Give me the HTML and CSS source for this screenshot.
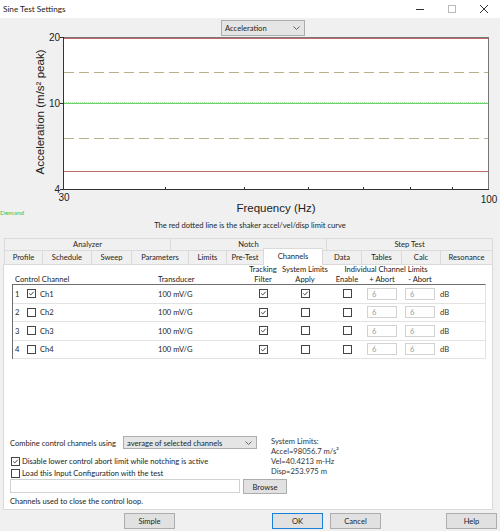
FILE: index.html
```html
<!DOCTYPE html>
<html>
<head>
<meta charset="utf-8">
<title>Sine Test Settings</title>
<link rel="stylesheet" href="styles.css">
</head>
<body>
<div class="titlebar">
  <span class="title">Sine Test Settings</span>
  <div class="wincontrols">
    <span class="wc"><svg width="10" height="10" viewBox="0 0 10 10"><line x1="1" y1="5.5" x2="9" y2="5.5" stroke="#333" stroke-width="1"/></svg></span>
    <span class="wc"><svg width="10" height="10" viewBox="0 0 10 10"><rect x="1.5" y="1.5" width="7" height="7" fill="none" stroke="#bbb" stroke-width="1"/></svg></span>
    <span class="wc"><svg width="10" height="10" viewBox="0 0 10 10"><path d="M1 1 L9 9 M9 1 L1 9" stroke="#333" stroke-width="1"/></svg></span>
  </div>
</div>

<div class="chart-wrap">
  <svg class="chart" width="500" height="200" viewBox="0 0 500 200">
    <rect x="63.5" y="19.5" width="425" height="152" fill="#fff" stroke="#777" stroke-width="1"/>
    <line x1="64" y1="20.5" x2="488" y2="20.5" stroke="#c06a6a" stroke-width="1"/>
    <line x1="64" y1="153.5" x2="488" y2="153.5" stroke="#c06a6a" stroke-width="1"/>
    <line x1="64" y1="54.5" x2="488" y2="54.5" stroke="#b8b088" stroke-width="1" stroke-dasharray="10 5"/>
    <line x1="64" y1="120.5" x2="488" y2="120.5" stroke="#b8b088" stroke-width="1" stroke-dasharray="10 5"/>
    <line x1="64" y1="85.5" x2="488" y2="85.5" stroke="#6fd26f" stroke-width="1"/>
    <line x1="64" y1="84.5" x2="488" y2="84.5" stroke="#a8e6a8" stroke-width="1" stroke-dasharray="1 1"/>
    <line x1="63.5" y1="19" x2="63.5" y2="172" stroke="#333" stroke-width="1"/>
    <line x1="60" y1="19.5" x2="63" y2="19.5" stroke="#333"/>
    <line x1="60" y1="85.5" x2="63" y2="85.5" stroke="#333"/>
    <line x1="60" y1="171.5" x2="63" y2="171.5" stroke="#333"/>
    <line x1="63.5" y1="171.5" x2="489" y2="171.5" stroke="#333" stroke-width="1"/>
    <g stroke="#333" stroke-width="1">
      <line x1="165.5" y1="169" x2="165.5" y2="171"/>
      <line x1="244.5" y1="169" x2="244.5" y2="171"/>
      <line x1="308.5" y1="169" x2="308.5" y2="171"/>
      <line x1="363.5" y1="169" x2="363.5" y2="171"/>
      <line x1="410.5" y1="169" x2="410.5" y2="171"/>
      <line x1="452.5" y1="169" x2="452.5" y2="171"/>
    </g>
    <g class="ticklbl">
      <text x="60" y="23" text-anchor="end">20</text>
      <text x="60" y="89" text-anchor="end">10</text>
      <text x="60" y="175" text-anchor="end">4</text>
      <text x="64" y="183" text-anchor="middle">30</text>
      <text x="489" y="185" text-anchor="middle">100</text>
    </g>
    <text class="axlbl" transform="translate(44 94) rotate(-90)" text-anchor="middle" textLength="125" lengthAdjust="spacingAndGlyphs">Acceleration (m/s² peak)</text>
    <text class="axlbl" x="276" y="194" text-anchor="middle">Frequency (Hz)</text>
    <text class="demand" x="0" y="197">Demand</text>
  </svg>
  <div class="select sel-accel"><span>Acceleration</span><svg class="chev" width="7" height="4" viewBox="0 0 7 4"><path d="M0.5 0.5 L3.5 3.5 L6.5 0.5" fill="none" stroke="#555" stroke-width="0.9"/></svg></div>
</div>

<div class="caption">The red dotted line is the shaker accel/vel/disp limit curve</div>

<div class="tabs">
  <div class="groups">
    <div class="grp g1">Analyzer</div>
    <div class="grp g2">Notch</div>
    <div class="grp g3">Step Test</div>
  </div>
  <div class="tabrow">
    <div class="tab t-profile">Profile</div>
    <div class="tab t-schedule">Schedule</div>
    <div class="tab t-sweep">Sweep</div>
    <div class="tab t-params">Parameters</div>
    <div class="tab t-limits">Limits</div>
    <div class="tab t-pretest">Pre-Test</div>
    <div class="tab t-channels active">Channels</div>
    <div class="tab t-data">Data</div>
    <div class="tab t-tables">Tables</div>
    <div class="tab t-calc">Calc</div>
    <div class="tab t-res">Resonance</div>
  </div>
</div>

<div class="panel">
  <div class="thead">
    <div class="h h-track1">Tracking</div>
    <div class="h h-sys1">System Limits</div>
    <div class="h h-ind">Individual Channel Limits</div>
    <div class="h h-ctrl">Control Channel</div>
    <div class="h h-trans">Transducer</div>
    <div class="h h-track2">Filter</div>
    <div class="h h-sys2">Apply</div>
    <div class="h h-en">Enable</div>
    <div class="h h-pa">+ Abort</div>
    <div class="h h-ma">- Abort</div>
  </div>
  <div class="ctable">
    <div class="row">
      <span class="num">1</span>
      <span class="cbcell"><span class="cb"><svg viewBox="0 0 9 9"><path d="M1.6 4.4 L3.6 6.4 L7.4 2.2"/></svg></span></span>
      <span class="name">Ch1</span>
      <span class="trans">100 mV/G</span>
      <span class="c-track"><span class="cb"><svg viewBox="0 0 9 9"><path d="M1.6 4.4 L3.6 6.4 L7.4 2.2"/></svg></span></span>
      <span class="c-apply"><span class="cb"><svg viewBox="0 0 9 9"><path d="M1.6 4.4 L3.6 6.4 L7.4 2.2"/></svg></span></span>
      <span class="c-en"><span class="cb"></span></span>
      <span class="inp c-pa">6</span>
      <span class="inp c-ma">6</span>
      <span class="db">dB</span>
    </div>
    <div class="row">
      <span class="num">2</span>
      <span class="cbcell"><span class="cb"></span></span>
      <span class="name">Ch2</span>
      <span class="trans">100 mV/G</span>
      <span class="c-track"><span class="cb"><svg viewBox="0 0 9 9"><path d="M1.6 4.4 L3.6 6.4 L7.4 2.2"/></svg></span></span>
      <span class="c-apply"><span class="cb"></span></span>
      <span class="c-en"><span class="cb"></span></span>
      <span class="inp c-pa">6</span>
      <span class="inp c-ma">6</span>
      <span class="db">dB</span>
    </div>
    <div class="row">
      <span class="num">3</span>
      <span class="cbcell"><span class="cb"></span></span>
      <span class="name">Ch3</span>
      <span class="trans">100 mV/G</span>
      <span class="c-track"><span class="cb"><svg viewBox="0 0 9 9"><path d="M1.6 4.4 L3.6 6.4 L7.4 2.2"/></svg></span></span>
      <span class="c-apply"><span class="cb"></span></span>
      <span class="c-en"><span class="cb"></span></span>
      <span class="inp c-pa">6</span>
      <span class="inp c-ma">6</span>
      <span class="db">dB</span>
    </div>
    <div class="row">
      <span class="num">4</span>
      <span class="cbcell"><span class="cb"></span></span>
      <span class="name">Ch4</span>
      <span class="trans">100 mV/G</span>
      <span class="c-track"><span class="cb"><svg viewBox="0 0 9 9"><path d="M1.6 4.4 L3.6 6.4 L7.4 2.2"/></svg></span></span>
      <span class="c-apply"><span class="cb"></span></span>
      <span class="c-en"><span class="cb"></span></span>
      <span class="inp c-pa">6</span>
      <span class="inp c-ma">6</span>
      <span class="db">dB</span>
    </div>
  </div>

  <div class="bottom">
    <div class="top-part">
      <div class="left-col">
        <div class="combine">
          <span class="lbl">Combine control channels using</span>
          <div class="select sel-combine"><span>average of selected channels</span><svg class="chev" width="7" height="4" viewBox="0 0 7 4"><path d="M0.5 0.5 L3.5 3.5 L6.5 0.5" fill="none" stroke="#555" stroke-width="0.9"/></svg></div>
        </div>
        <div class="chkline first"><span class="cb"><svg viewBox="0 0 9 9"><path d="M1.6 4.4 L3.6 6.4 L7.4 2.2"/></svg></span><span>Disable lower control abort limit while notching is active</span></div>
        <div class="chkline"><span class="cb"></span><span>Load this Input Configuration with the test</span></div>
      </div>
      <div class="syslimits">
        <div>System Limits:</div>
        <div>Accel=98056.7 m/s²</div>
        <div>Vel=40.4213 m-Hz</div>
        <div>Disp=253.975 m</div>
      </div>
    </div>
    <div class="fileline">
      <span class="textbox"></span>
      <span class="btn browse">Browse</span>
    </div>
    <div class="note">Channels used to close the control loop.</div>
  </div>
</div>

<div class="buttons">
  <span class="btn b-simple">Simple</span>
  <span class="btn b-ok">OK</span>
  <span class="btn b-cancel">Cancel</span>
  <span class="btn b-help">Help</span>
</div>
</body>
</html>
```

FILE: styles.css
```css
* { box-sizing: border-box; }
html, body { margin: 0; padding: 0; }
body {
  width: 500px;
  height: 531px;
  overflow: hidden;
  background: #f0f0f0;
  font-family: Lato, "Segoe UI", "Noto Sans", sans-serif;
  font-size: 7.6px;
  color: #1e1e1e;
}

/* title bar */
.titlebar {
  height: 18px;
  background: #fff;
  display: flex;
  align-items: center;
  padding-left: 3px;
}
.title { font-size: 8.2px; color: #222; }
.wincontrols { margin-left: auto; display: flex; }
.wc {
  width: 32px;
  height: 18px;
  display: flex;
  align-items: center;
  justify-content: center;
}

/* dropdowns */
.select {
  display: flex;
  align-items: center;
  background: #e5e5e5;
  border: 1px solid #adadad;
  color: #1e1e1e;
  padding: 0 4px 0 3px;
}
.select .chev { margin-left: auto; }

/* chart */
.chart-wrap { position: relative; height: 200px; }
.chart { display: block; }
.sel-accel {
  position: absolute;
  left: 221px;
  top: 2px;
  width: 84px;
  height: 16px;
}
.ticklbl text { font-family: "Liberation Sans", Arial, sans-serif; font-size: 10px; fill: #222; }
.axlbl { font-family: "Liberation Sans", Arial, sans-serif; font-size: 11.5px; fill: #222; }
.demand { font-family: Lato, sans-serif; font-size: 6.5px; fill: #3ec43e; }

.caption {
  margin-top: 1px;
  height: 12px;
  line-height: 12px;
  text-align: center;
  margin-bottom: 7px;
}

/* tabs */
.tabs { margin-left: 4px; width: 489px; }
.groups, .tabrow { display: flex; }
.grp {
  height: 12px;
  line-height: 11px;
  text-align: center;
  border: 1px solid #dadada;
  border-right: none;
  border-bottom: none;
  background: #f0f0f0;
}
.grp:last-child { border-right: 1px solid #dadada; }
.g1 { width: 166px; }
.g2 { width: 156px; }
.g3 { width: 167px; }
.tabrow { height: 14px; align-items: flex-end; }
.tab {
  height: 14px;
  line-height: 13px;
  text-align: center;
  border: 1px solid #dadada;
  border-right: none;
  border-bottom: none;
  background: #f0f0f0;
}
.tab:last-child { border-right: 1px solid #dadada; }
.tab.active {
  background: #fff;
  height: 17px;
  line-height: 14px;
  margin-bottom: -1px;
  position: relative;
  z-index: 1;
  border-right: 1px solid #dadada;
}
.tab.active + .tab { border-left: none; }
.t-profile { width: 38px; }
.t-schedule { width: 49px; }
.t-sweep { width: 40px; }
.t-params { width: 57px; }
.t-limits { width: 38px; }
.t-pretest { width: 37px; }
.t-channels { width: 60px; }
.t-data { width: 38px; }
.t-tables { width: 40px; }
.t-calc { width: 39px; }
.t-res { width: 53px; }

/* panel */
.panel {
  margin-left: 3px;
  width: 490px;
  height: 246px;
  background: #fff;
  border: 1px solid #dadada;
  display: flex;
  flex-direction: column;
}

.thead, .row {
  display: grid;
  grid-template-columns: 14px 13px 118px 95px 20px 64px 20px 10px 30px 8px 30px 5px 1fr;
}
.thead {
  margin-left: 9px;
  width: 474px;
  grid-template-rows: 9.5px 9.5px;
  line-height: 9.5px;
  color: #222;
}
.h { white-space: nowrap; display: flex; justify-content: center; }
.h-track1 { grid-row: 1; grid-column: 5; }
.h-sys1 { grid-row: 1; grid-column: 6; }
.h-ind { grid-row: 1; grid-column: 7 / 12; }
.h-ctrl { grid-row: 2; grid-column: 1 / 4; justify-content: flex-start; padding-left: 2px; }
.h-trans { grid-row: 2; grid-column: 4; justify-content: flex-start; }
.h-track2 { grid-row: 2; grid-column: 5; }
.h-sys2 { grid-row: 2; grid-column: 6; }
.h-en { grid-row: 2; grid-column: 7; }
.h-pa { grid-row: 2; grid-column: 9; }
.h-ma { grid-row: 2; grid-column: 11; }

.ctable {
  margin-left: 8px;
  width: 474px;
  border-top: 1px solid #6e6e6e;
  border-left: 1px solid #6e6e6e;
  border-right: 1px solid #e2e2e2;
}
.row {
  height: 18.5px;
  align-items: center;
  border-bottom: 1px solid #e2e2e2;
}
.num { grid-column: 1; padding-left: 2px; }
.cbcell { grid-column: 2; display: flex; }
.name { grid-column: 3; }
.trans { grid-column: 4; }
.c-track { grid-column: 5; }
.c-apply { grid-column: 6; }
.c-en { grid-column: 7; }
.c-pa { grid-column: 9; }
.c-ma { grid-column: 11; }
.db { grid-column: 13; color: #333; }
.c-track, .c-apply, .c-en { display: flex; justify-content: center; }
.cb {
  width: 9px;
  height: 9px;
  border: 1px solid #444;
  background: #fff;
  display: inline-block;
  flex: none;
}
.cb svg { display: block; width: 7px; height: 7px; }
.cb svg path { fill: none; stroke: #222; stroke-width: 1.1; }
.inp {
  height: 12px;
  line-height: 10px;
  border: 1px solid #d2d2d2;
  background: #fff;
  color: #9a9a9a;
  padding-left: 4px;
}

/* bottom area */
.bottom {
  margin-top: auto;
  padding: 0 0 2px 6px;
}
.top-part { display: flex; }
.left-col { width: 261px; }
.combine {
  height: 13px;
  display: flex;
  align-items: center;
}
.combine .lbl { width: 113px; }
.sel-combine { width: 134px; height: 13px; }
.chkline {
  height: 12px;
  display: flex;
  align-items: center;
  gap: 2px;
  padding-left: 1px;
}
.chkline.first { margin-top: 6px; }
.syslimits { line-height: 10px; color: #333; }
.fileline { display: flex; align-items: flex-start; height: 15px; }
.textbox {
  width: 230px;
  height: 14px;
  background: #fff;
  border: 1px solid #d2d2d2;
}
.btn {
  display: flex;
  align-items: center;
  justify-content: center;
  background: #e1e1e1;
  border: 1px solid #adadad;
  color: #1e1e1e;
}
.browse { margin-left: 3px; width: 44px; height: 15px; }
.note { margin-top: 2px; line-height: 11px; height: 11px; }

/* dialog buttons */
.buttons {
  display: flex;
  padding-top: 3px;
}
.buttons .btn { width: 51px; height: 16px; }
.b-simple { margin-left: 124px; }
.buttons .b-ok { margin-left: 97px; border-color: #1a7fd6; }
.b-cancel { margin-left: 7px; }
.b-help { margin-left: 65px; }
```
